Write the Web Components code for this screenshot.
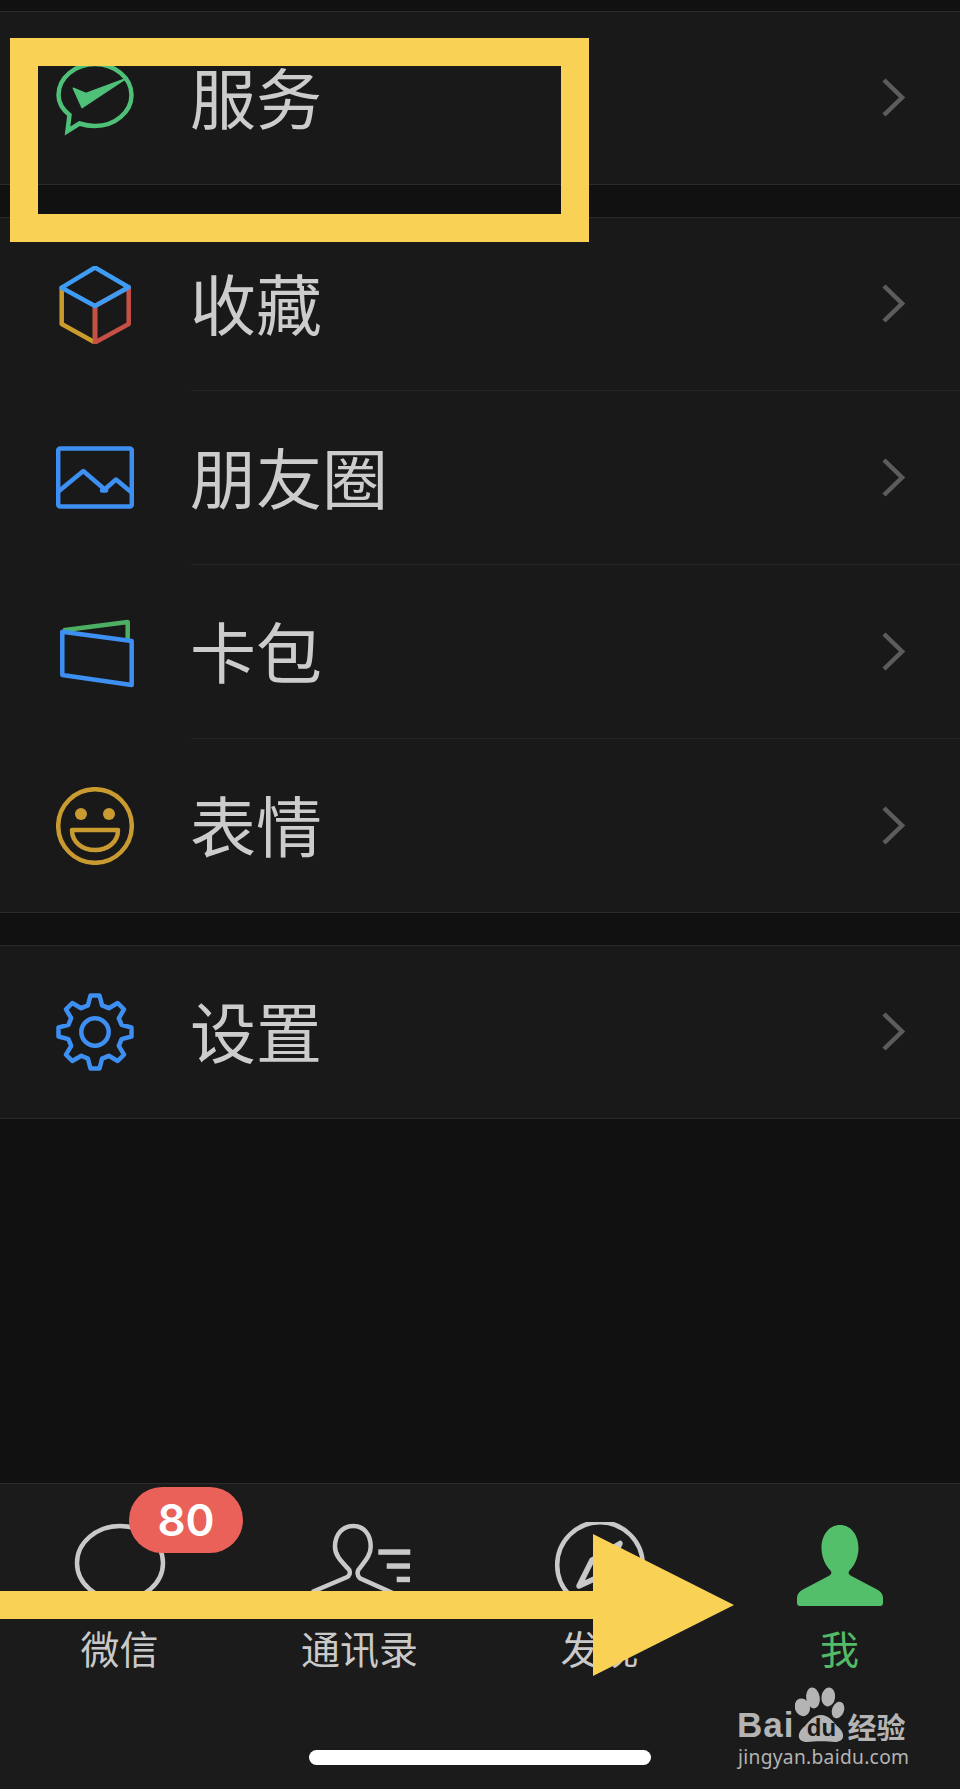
<!DOCTYPE html>
<html lang="zh-CN">
<head>
<meta charset="utf-8">
<title>我</title>
<style>
  html, body { margin: 0; padding: 0; background: #111; }
</style>
</head>
<body>
<wx-screen>
  <wx-group style="margin-top:11px">
    <wx-row label="服务" last>
      <svg slot="icon" width="78" height="78" viewBox="0 0 78 78" fill="none">
        <path d="M13.500 56C6 50 2.500 43.500 2.500 36 2.500 19 19 5 39 5S75.500 19 75.500 36 59 67 39 67C33.500 67 28 66 23.500 64.500L11.500 72z" stroke="#4fc078" stroke-width="4.500"/>
        <path d="M17.300 29.300L30 34.500 69 20 26 48.500z" fill="#4fc078" stroke="#4fc078" stroke-width="1.500" stroke-linejoin="round"/>
      </svg>
    </wx-row>
  </wx-group>
  <wx-group style="margin-top:32px">
    <wx-row label="收藏" style="height:173px">
      <svg slot="icon" width="78" height="78" viewBox="0 0 78 78" fill="none" stroke-width="4.500" stroke-linecap="round" stroke-linejoin="round">
        <path d="M5.700 21.700V58L39 76.500V40" stroke="#c99c2c"/>
        <path d="M72.700 21.200V58L39 76.500V40z" stroke="#c64f46"/>
        <path d="M39 1.500L72.700 21.200 39 40 5.700 21.700z" stroke="#3f9cf5"/>
      </svg>
    </wx-row>
    <wx-row label="朋友圈" style="height:174px">
      <svg slot="icon" width="78" height="78" viewBox="0 0 78 78" fill="none" stroke="#3e8ff2" stroke-width="4.500" stroke-linejoin="round" stroke-linecap="round">
        <rect x="2.200" y="9.400" width="73.600" height="58.200" rx="2"/>
        <path d="M3 52L27.300 32 50 51.500H46M48 51L60 40.500 75 53"/>
      </svg>
    </wx-row>
    <wx-row label="卡包" style="height:174px">
      <svg slot="icon" width="78" height="78" viewBox="0 0 78 78" fill="none" stroke-width="4.500" stroke-linejoin="round">
        <path d="M7.300 17.300L71.700 9V26.300" stroke="#4caf62"/>
        <path d="M6.300 18.700L75.700 28V72L6.300 62z" stroke="#3e8ff2"/>
      </svg>
    </wx-row>
    <wx-row label="表情" style="height:173px" last>
      <svg slot="icon" width="78" height="78" viewBox="0 0 78 78" fill="none" stroke="#c89a30" stroke-width="4.500">
        <circle cx="39" cy="39" r="36.800"/>
        <circle cx="25" cy="27" r="6" fill="#c89a30" stroke="none"/>
        <circle cx="53" cy="27" r="6" fill="#c89a30" stroke="none"/>
        <path d="M16 43H62C62 55 52 63 39 63S16 55 16 43z" stroke-linejoin="round"/>
      </svg>
    </wx-row>
  </wx-group>
  <wx-group style="margin-top:32px">
    <wx-row label="设置" last>
      <wx-gear slot="icon"></wx-gear>
    </wx-row>
  </wx-group>

  <wx-tabbar slot="bottom">
    <wx-tab label="微信" badge="80">
      <svg slot="icon" width="110" height="90" viewBox="-7 0 110 90" fill="none" stroke="#c9c9c9" stroke-width="4.500">
        <ellipse cx="48" cy="41" rx="43" ry="37"/>
      </svg>
    </wx-tab>
    <wx-tab label="通讯录">
      <svg slot="icon" width="110" height="90" viewBox="-7 0 110 90" fill="none">
        <path d="M0 70L34.700 55.300C37.500 54 38.500 51 37.300 48 30 40 23 34 23 24.700 23 12 31 4 41.300 4S58.700 12 58.700 24.700C58.700 34 52 40 46.300 48 45 51 45.500 54 48 56.300L83 72" stroke="#c9c9c9" stroke-width="4.500"/>
        <rect x="66.300" y="27.300" width="32" height="5.500" fill="#c9c9c9"/>
        <rect x="74.700" y="41.300" width="23.300" height="5.500" fill="#c9c9c9"/>
        <rect x="84.700" y="54.700" width="13.300" height="5.500" fill="#c9c9c9"/>
      </svg>
    </wx-tab>
    <wx-tab label="发现">
      <svg slot="icon" width="110" height="90" viewBox="-7 0 110 90" fill="none" stroke="#c9c9c9" stroke-width="4.500">
        <circle cx="48" cy="43" r="42.800"/>
        <path d="M27 64L40 38 68 21.500 53 52z" stroke-linejoin="round" stroke-width="5.500"/>
      </svg>
    </wx-tab>
    <wx-tab label="我" active>
      <svg slot="icon" width="110" height="90" viewBox="-7 0 110 90">
        <path d="M48 3C59 3 66.500 13 66.500 26 66.500 36 62 44 58 48 56 50 56 52 58.500 53.500L86 68C89.500 70 91 73 91 76V81Q91 84 88 84H8Q5 84 5 81V76C5 73 6.500 70 10 68L37.500 53.500C40 52 40 50 38 48 34 44 29.500 36 29.500 26 29.500 13 37 3 48 3z" fill="#54bf6b"/>
      </svg>
    </wx-tab>
  </wx-tabbar>

  <mark-box slot="over"></mark-box>
  <mark-arrow slot="over"></mark-arrow>
  <bd-mark slot="over"></bd-mark>
  <home-bar slot="over"></home-bar>
</wx-screen>

<script>
const CJK = '"Noto Sans CJK SC", "Noto Sans", sans-serif';

class WxScreen extends HTMLElement {
    connectedCallback() {
        this.attachShadow({ mode: 'open' });
        this.shadowRoot.innerHTML = `
            <style>
                :host {
                    display: flex;
                    flex-direction: column;
                    position: relative;
                    width: 960px;
                    height: 1789px;
                    overflow: hidden;
                    background: #111;
                    font-family: ${CJK};
                }
                .rest { flex: 1; }
            </style>
            <slot></slot>
            <div class="rest"></div>
            <slot name="bottom"></slot>
            <slot name="over"></slot>
        `;
    }
}

class WxGroup extends HTMLElement {
    connectedCallback() {
        this.attachShadow({ mode: 'open' });
        this.shadowRoot.innerHTML = `
            <style>
                :host {
                    display: block;
                    background: #191919;
                    border-top: 1px solid #2a2a2a;
                    border-bottom: 1px solid #2a2a2a;
                }
            </style>
            <slot></slot>
        `;
    }
}

class WxRow extends HTMLElement {
    connectedCallback() {
        this.attachShadow({ mode: 'open' });
        this.shadowRoot.innerHTML = `
            <style>
                :host {
                    display: flex;
                    align-items: center;
                    height: 172px;
                    padding-left: 56px;
                    box-sizing: border-box;
                }
                .icon { width: 78px; height: 78px; flex: none; display: flex; }
                .body {
                    flex: 1;
                    align-self: stretch;
                    display: flex;
                    align-items: center;
                    justify-content: space-between;
                    margin-left: 57px;
                    padding-right: 55px;
                    border-bottom: 1px solid #262626;
                }
                :host([last]) .body { border-bottom: 0; }
                .label { font-size: 66px; line-height: 1; color: #cccccc; font-weight: 400; margin: 0 0 6px -1px; }
                svg { display: block; }
            </style>
            <div class="icon"><slot name="icon"></slot></div>
            <div class="body">
                <span class="label">${this.getAttribute('label')}</span>
                <svg width="24" height="42" viewBox="0 0 24 42" fill="none">
                    <path d="M3 3L21 20.500 3 38" stroke="#5c5c5c" stroke-width="4.500"/>
                </svg>
            </div>
        `;
    }
}

class WxGear extends HTMLElement {
    connectedCallback() {
        let d = '';
        const pt = (r, deg) => {
            const a = deg * Math.PI / 180;
            return (39 + r * Math.cos(a)).toFixed(1) + ' ' + (39 + r * Math.sin(a)).toFixed(1);
        };
        for (let i = 0; i < 8; i++) {
            const a = i * 45 - 90;
            d += (i ? 'L' : 'M') + pt(27.5, a - 15) + 'L' + pt(36.8, a - 7) + 'L' + pt(36.8, a + 7) + 'L' + pt(27.5, a + 15);
        }
        this.attachShadow({ mode: 'open' });
        this.shadowRoot.innerHTML = `
            <style>
                :host { display: block; width: 78px; height: 78px; }
                svg { display: block; }
            </style>
            <svg width="78" height="78" viewBox="0 0 78 78" fill="none" stroke="#3e8ff2" stroke-width="4.500" stroke-linejoin="round">
                <path d="${d}z"/>
                <circle cx="39" cy="39" r="13.700"/>
            </svg>
        `;
    }
}

class WxTabbar extends HTMLElement {
    connectedCallback() {
        this.attachShadow({ mode: 'open' });
        this.shadowRoot.innerHTML = `
            <style>
                :host {
                    display: grid;
                    grid-template-columns: repeat(4, 1fr);
                    height: 306px;
                    box-sizing: border-box;
                    background: #1b1b1b;
                    border-top: 1px solid #2a2a2a;
                }
            </style>
            <slot></slot>
        `;
    }
}

class WxTab extends HTMLElement {
    connectedCallback() {
        const badge = this.getAttribute('badge');
        this.attachShadow({ mode: 'open' });
        this.shadowRoot.innerHTML = `
            <style>
                :host {
                    display: flex;
                    flex-direction: column;
                    align-items: center;
                    position: relative;
                    padding-top: 38px;
                }
                .icon { width: 110px; height: 90px; display: flex; }
                .label { margin-top: 16px; font-size: 39px; line-height: 1; color: #c9c9c9; font-weight: 400; margin-left: -1px; }
                :host([active]) .label { color: #53bb67; }
                .badge {
                    position: absolute;
                    left: 129px;
                    top: 3px;
                    width: 114px;
                    height: 66px;
                    border-radius: 33px;
                    background: #ea615a;
                    color: #fff;
                    font: 600 44px/66px Inter, sans-serif;
                    text-align: center;
                }
            </style>
            <div class="icon"><slot name="icon"></slot></div>
            <div class="label">${this.getAttribute('label')}</div>
            ${badge ? `<div class="badge">${badge}</div>` : ''}
        `;
    }
}

class MarkBox extends HTMLElement {
    connectedCallback() {
        this.attachShadow({ mode: 'open' });
        this.shadowRoot.innerHTML = `
            <style>
                :host {
                    position: absolute;
                    left: 10px;
                    top: 38px;
                    width: 579px;
                    height: 204px;
                    box-sizing: border-box;
                    border: solid #f8d155;
                    border-width: 28px;
                }
            </style>
        `;
    }
}

class MarkArrow extends HTMLElement {
    connectedCallback() {
        this.attachShadow({ mode: 'open' });
        this.shadowRoot.innerHTML = `
            <style>
                :host { position: absolute; left: 0; top: 1534px; }
                svg { display: block; }
            </style>
            <svg width="734" height="142" viewBox="0 0 734 142">
                <path d="M0 57H593V0L734 71 593 142V85H0z" fill="#f8d155"/>
            </svg>
        `;
    }
}

class HomeBar extends HTMLElement {
    connectedCallback() {
        this.attachShadow({ mode: 'open' });
        this.shadowRoot.innerHTML = `
            <style>
                :host {
                    position: absolute;
                    left: 309px;
                    top: 1750px;
                    width: 342px;
                    height: 15px;
                    border-radius: 8px;
                    background: #fff;
                }
            </style>
        `;
    }
}

class BdMark extends HTMLElement {
    connectedCallback() {
        this.attachShadow({ mode: 'open' });
        this.shadowRoot.innerHTML = `
            <style>
                :host {
                    position: absolute;
                    left: 736px;
                    top: 1686px;
                    width: 180px;
                    color: #b4b4b4;
                    font-family: "Liberation Sans", sans-serif;
                }
                .logo { display: flex; align-items: flex-end; height: 57px; padding-left: 1px; }
                .bai { font: 700 35px/33px "Liberation Sans", sans-serif; letter-spacing: 1px; margin-bottom: 2px; }
                .paw { position: relative; width: 52px; height: 57px; margin-left: 1px; flex: none; }
                .paw svg { display: block; }
                .du {
                    position: absolute;
                    left: 0;
                    right: 0;
                    bottom: 3px;
                    text-align: center;
                    font: 700 24px/24px "Liberation Sans", sans-serif;
                    color: #1b1b1b;
                }
                .jy {
                    font: 700 29px/29px ${CJK};
                    margin-bottom: 2px;
                    white-space: nowrap;
                }
                .url { font: 400 19.200px/27px "Noto Sans", sans-serif; padding-left: 2px; letter-spacing: .3px; white-space: nowrap; }
            </style>
            <div class="logo">
                <span class="bai">Bai</span>
                <span class="paw">
                    <svg width="52" height="57" viewBox="0 0 52 57" fill="#b4b4b4">
                        <ellipse cx="7.300" cy="21.300" rx="7.500" ry="9" transform="rotate(-20 7.300 21.300)"/>
                        <ellipse cx="18" cy="12" rx="6.800" ry="10.500" transform="rotate(-8 18 12)"/>
                        <ellipse cx="33.300" cy="11" rx="6.800" ry="9.500" transform="rotate(8 33.300 11)"/>
                        <ellipse cx="43" cy="24" rx="6" ry="8.500" transform="rotate(20 43 24)"/>
                        <path d="M26 29C33 29 37 34 42 40 51 47 50 56 40 56 32 55 20 55 12 56 2 56 1 47 10 40 15 34 19 29 26 29z"/>
                    </svg>
                    <span class="du">du</span>
                </span>
                <span class="jy">经验</span>
            </div>
            <div class="url">jingyan.baidu.com</div>
        `;
    }
}

customElements.define('wx-screen', WxScreen);
customElements.define('wx-group', WxGroup);
customElements.define('wx-row', WxRow);
customElements.define('wx-gear', WxGear);
customElements.define('wx-tabbar', WxTabbar);
customElements.define('wx-tab', WxTab);
customElements.define('mark-box', MarkBox);
customElements.define('mark-arrow', MarkArrow);
customElements.define('home-bar', HomeBar);
customElements.define('bd-mark', BdMark);
</script>
</body>
</html>
